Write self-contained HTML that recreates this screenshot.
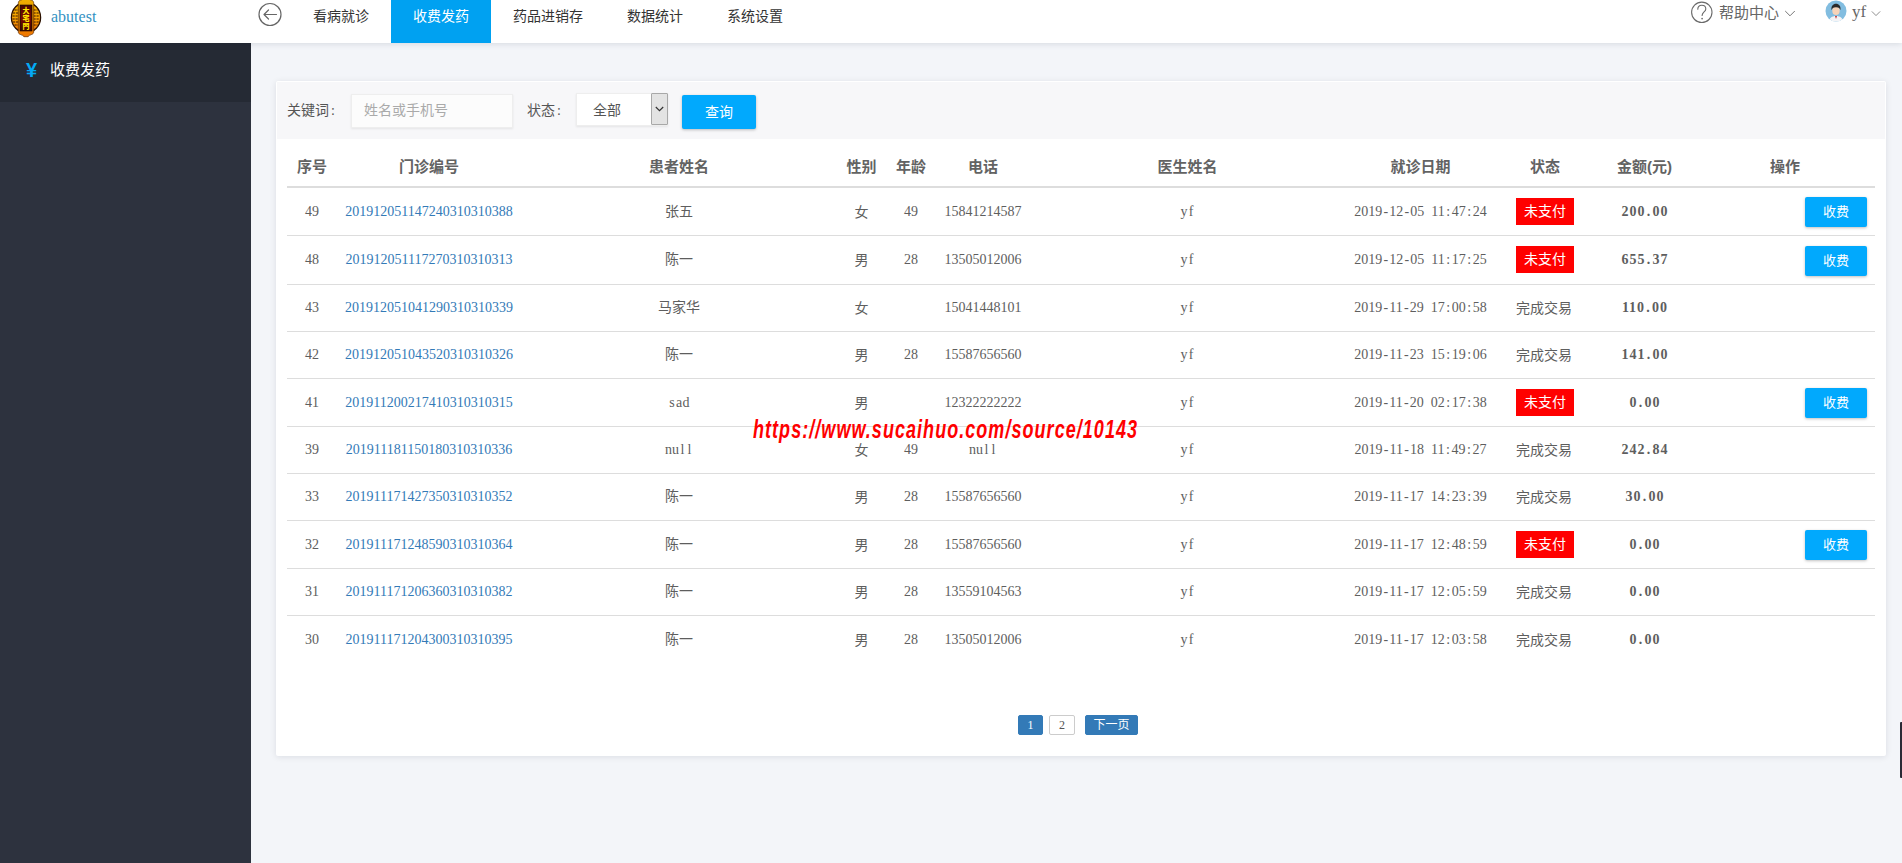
<!DOCTYPE html>
<html lang="zh-CN">
<head>
<meta charset="utf-8">
<title>收费发药</title>
<style>
*{box-sizing:border-box;margin:0;padding:0}
html,body{width:1902px;height:863px;overflow:hidden}
body{position:relative;background:#f3f5f9;font-family:"Liberation Serif","Noto Sans CJK SC",sans-serif;font-size:14px;color:#555}
.abs{position:absolute}
.cn{font-family:"Liberation Sans","Noto Sans CJK SC",sans-serif}
/* header */
#hd{position:absolute;left:0;top:0;width:1902px;height:43px;background:#fff;box-shadow:0 1px 6px rgba(0,21,41,.12);z-index:5}
#brand{position:absolute;left:51px;top:7px;font:16px/20px "Liberation Serif",serif;color:#3391c2}
.nav{position:absolute;top:0;height:43px;line-height:32px;text-align:center;font:14px/32px "Liberation Sans","Noto Sans CJK SC",sans-serif;color:#333}
.nav.on{background:#00a1f1;color:#fff}
#help{position:absolute;left:1719px;top:1px;font:15px/24px "Liberation Sans","Noto Sans CJK SC",sans-serif;color:#666}
#user{position:absolute;left:1852px;top:1px;font:17px/22px "Liberation Serif",serif;color:#666}
/* sidebar */
#sb{position:absolute;left:0;top:43px;width:251px;height:820px;background:#2d323e}
#sb .it{position:absolute;left:0;top:0;width:251px;height:59px;background:#252a34}
#sb .yen{position:absolute;left:26px;top:16px;font:bold 20px/22px "Liberation Sans",sans-serif;color:#03a9f4}
#sb .tx{position:absolute;left:50px;top:15px;font:15px/24px "Liberation Sans","Noto Sans CJK SC",sans-serif;color:#fff}
/* panel */
#pn{position:absolute;left:276px;top:81px;width:1610px;height:675px;background:#fff;box-shadow:0 1px 6px rgba(0,21,41,.10);border-radius:2px}
#pi{position:absolute;left:0;top:1px;width:1610px;height:674px}
#ft{position:absolute;left:1px;top:0;width:1608px;height:57px;background:#f7f7f9}
.lb{position:absolute;font:14px/20px "Liberation Sans","Noto Sans CJK SC",sans-serif;color:#555}
#kw{position:absolute;left:74px;top:12px;width:162px;height:34px;background:#fcfcfc;border:1px solid #eee;box-shadow:0 1px 2px rgba(0,0,0,.08);font:14px/31px "Liberation Sans","Noto Sans CJK SC",sans-serif;color:#aaa;padding-left:12px}
#sl{position:absolute;left:299px;top:11px;width:92px;height:33px;background:#fff;border:1px solid #eee;box-shadow:0 1px 2px rgba(0,0,0,.08);font:14px/32px "Liberation Sans","Noto Sans CJK SC",sans-serif;color:#555;padding-left:16px}
#sl .ar{position:absolute;right:-1px;top:-1px;width:17px;height:32px;background:#e3e3e3;border:1px solid #a8a8a8;border-radius:1px}
#qb{position:absolute;left:405px;top:13px;width:74px;height:34px;background:#01a9fd;color:#fff;text-align:center;font:14px/34px "Liberation Sans","Noto Sans CJK SC",sans-serif;border-radius:2px;box-shadow:0 1px 3px rgba(0,0,0,.25)}
/* table */
table{position:absolute;left:11px;top:65px;width:1588px;border-collapse:separate;border-spacing:0;table-layout:fixed}
th{height:41px;border-bottom:2px solid #ddd;font:bold 15px/20px "Liberation Sans","Noto Sans CJK SC",sans-serif;color:#636363;text-align:center;vertical-align:middle;padding:0}
td{border-bottom:1px solid #ddd;text-align:center;vertical-align:middle;padding:0;font-size:14px;line-height:20px;color:#5e5e5e;white-space:nowrap}
tr:last-child td{border-bottom:0}
td.lk{color:#337ab7}
td.am{font-weight:bold;letter-spacing:1px;padding-left:1px}
td.cn,td.st{font-family:"Liberation Sans","Noto Sans CJK SC",sans-serif}
td.op{text-align:right;padding-right:8px}
i.c{font-style:normal;display:inline-block;width:8px;text-align:center;font-family:"Liberation Serif",serif}
i.p{font-style:normal;display:inline-block;width:7px;text-align:center}
.lt{font-size:14px}
.bd{display:inline-block;width:58px;height:27px;line-height:26px;position:relative;top:0;background:#ff0000;color:#fff;font-size:14px;vertical-align:middle}
.btn{display:inline-block;width:62px;height:30px;line-height:30px;background:#01a9fd;color:#fff;text-align:center;font:13px/30px "Liberation Sans","Noto Sans CJK SC",sans-serif;border-radius:2px;box-shadow:0 1px 3px rgba(0,0,0,.25);vertical-align:middle;position:relative;top:0}
tr.r2 .bd{top:-1px}
.ok{position:relative;left:-1px}
tr.r2 .btn{top:1px}
/* pagination */
.pg{position:absolute;top:633px;height:20px;font:12px/18px "Liberation Serif","Noto Sans CJK SC",serif;text-align:center;border-radius:2px}
.pg.a{background:#337ab7;color:#fff;border:1px solid #337ab7}
.pg.b{background:#fff;color:#555;border:1px solid #ccc}
#wm{position:absolute;left:753px;top:413px;z-index:9;font:italic bold 25px/32px "Liberation Sans",sans-serif;color:#ff0000;white-space:nowrap;transform-origin:0 50%;transform:scaleX(.72);letter-spacing:1.45px}
#sc{position:absolute;left:1900px;top:722px;width:2px;height:56px;background:#2a2a35;border-radius:1px 0 0 1px}
</style>
</head>
<body>
<div id="hd">
  <svg class="abs" style="left:9px;top:-3px" width="34" height="42" viewBox="0 0 34 42">
    <defs>
      <linearGradient id="g1" x1="0" y1="0" x2="0" y2="1"><stop offset="0" stop-color="#f5b400"/><stop offset=".5" stop-color="#f7a400"/><stop offset="1" stop-color="#ee6c00"/></linearGradient>
      <linearGradient id="g2" x1="0" y1="0" x2="0" y2="1"><stop offset="0" stop-color="#4a0600"/><stop offset=".5" stop-color="#7c0800"/><stop offset="1" stop-color="#3c0500"/></linearGradient>
      <linearGradient id="g3" x1="0" y1="0" x2="0" y2="1"><stop offset="0" stop-color="#f0b000"/><stop offset=".6" stop-color="#e89000"/><stop offset="1" stop-color="#f07400"/></linearGradient>
    </defs>
    <ellipse cx="17" cy="20.500" rx="14.600" ry="15.200" fill="url(#g1)" stroke="#2a1000" stroke-width="1.300"/>
    <g stroke="#2a0e00" stroke-width="1.100" fill="none" opacity=".95" stroke-dasharray="2.200 .800">
      <path d="M5.500 13h4M4 16h5.500M3.500 19h6M3.500 22h6M4 25h5.500M5.500 28h4"/>
      <path d="M24.500 13h4M24.500 16h5.500M24.500 19h6M24.500 22h6M24.500 25h5.500M24.500 28h4"/>
    </g>
    <path d="M9.300 6.500c0-2 .800-3 2.200-3.300 1.500-.400 2.500-1.200 3-2.200h5c.500 1 1.500 1.800 3 2.200 1.400.300 2.200 1.300 2.200 3.300v28c0 1.800-.800 2.600-2.200 3-1.500.400-2.800 1.200-3.500 2.200h-4c-.700-1-2-1.800-3.500-2.200-1.400-.400-2.200-1.200-2.200-3z" fill="url(#g3)" stroke="#5a2600" stroke-width=".700"/>
    <rect x="11.200" y="8.200" width="11.600" height="25.600" fill="url(#g2)" stroke="#1e0300" stroke-width="1"/>
    <g font-family="'Noto Sans CJK SC',sans-serif" font-weight="900" font-size="7" fill="#ffe600" text-anchor="middle">
      <text x="17" y="15.700">大</text><text x="17" y="23.900">宅</text><text x="17" y="32.300">門</text>
    </g>
  </svg>
  <div id="brand">abutest</div>
  <svg class="abs" style="left:257px;top:2px" width="26" height="26" viewBox="0 0 26 26" fill="none" stroke="#666" stroke-width="1.2"><circle cx="13" cy="12.500" r="11"/><path d="M19.500 12.500H7M11.500 8l-4.500 4.500 4.500 4.500" stroke-linecap="round" stroke-linejoin="round"/></svg>
  <div class="nav" style="left:291px;width:100px">看病就诊</div>
  <div class="nav on" style="left:391px;width:100px">收费发药</div>
  <div class="nav" style="left:491px;width:114px">药品进销存</div>
  <div class="nav" style="left:605px;width:100px">数据统计</div>
  <div class="nav" style="left:705px;width:100px">系统设置</div>
  <svg class="abs" style="left:1690px;top:0" width="24" height="25" viewBox="0 0 24 25" fill="none" stroke="#6a6a6a" stroke-width="1.100"><circle cx="11.800" cy="12.300" r="10.200"/><path d="M7.800 9.300c0-2.600 1.700-4.100 4-4.100s4 1.500 4 3.700c0 2.900-3.700 3.200-3.700 6.600" stroke-linecap="round"/><circle cx="12.100" cy="18.600" r=".850" fill="#6a6a6a" stroke="none"/></svg>
  <div id="help">帮助中心</div>
  <svg class="abs" style="left:1784px;top:10px" width="12" height="7" viewBox="0 0 12 7" fill="none" stroke="#777" stroke-width="1"><path d="M1.200 1l4.800 4.800L10.800 1"/></svg>
  <svg class="abs" style="left:1825px;top:0" width="22" height="22" viewBox="0 0 22 22">
    <defs><clipPath id="cp"><circle cx="11" cy="11" r="10.500"/></clipPath></defs>
    <circle cx="11" cy="11" r="10.500" fill="#82bde0"/>
    <g clip-path="url(#cp)">
      <path d="M4 22c0-4 3-6 7-6s7 2 7 6z" fill="#f4f4f6"/>
      <path d="M10 16l1 3 1-3z" fill="#c03030"/>
      <ellipse cx="11" cy="10.800" rx="3.700" ry="4.200" fill="#f6d3b8"/>
      <path d="M6.600 10.200c-.8-4.200 1.600-6.400 4.400-6.400s5.200 2.200 4.400 6.400c-.6-1.900-1.300-2.700-4.400-2.900-3.100.2-3.800 1-4.400 2.900z" fill="#2a2a2a"/>
    </g>
  </svg>
  <div id="user">yf</div>
  <svg class="abs" style="left:1871px;top:10px" width="10" height="7" viewBox="0 0 12 8" fill="none" stroke="#777" stroke-width="1"><path d="M1 1.500l5 5 5-5"/></svg>
</div>
<div id="sb"><div class="it"></div><div class="yen">¥</div><div class="tx">收费发药</div></div>
<div id="pn"><div id="pi">
  <div id="ft">
    <div class="lb" style="left:10px;top:18px">关键词<i class="c">:</i></div>
    <div id="kw">姓名或手机号</div>
    <div class="lb" style="left:250px;top:18px">状态<i class="c">:</i></div>
    <div id="sl">全部<div class="ar"><svg class="abs" style="left:3px;top:12px" width="9" height="6" viewBox="0 0 9 6" fill="none" stroke="#333" stroke-width="1.200"><path d="M.8 1l3.700 3.700L8.200 1"/></svg></div></div>
    <div id="qb">查询</div>
  </div>
  <table>
    <colgroup><col style="width:50px"><col style="width:184px"><col style="width:316px"><col style="width:49px"><col style="width:50px"><col style="width:94px"><col style="width:315px"><col style="width:151px"><col style="width:98px"><col style="width:101px"><col style="width:180px"></colgroup>
    <thead><tr><th>序号</th><th>门诊编号</th><th>患者姓名</th><th>性别</th><th>年龄</th><th>电话</th><th>医生姓名</th><th>就诊日期</th><th>状态</th><th>金额(元)</th><th>操作</th></tr></thead>
    <tbody>
<tr style="height:48px"><td>49</td><td class="lk">201912051147240310310388</td><td>张五</td><td class="cn">女</td><td>49</td><td>15841214587</td><td><span class="lt"><i class="p">y</i><i class="p">f</i></span></td><td>2019<i class="p">-</i>12<i class="p">-</i>05<i class="p"> </i>11<i class="p">:</i>47<i class="p">:</i>24</td><td class="st"><span class="bd">未支付</span></td><td class="am">200<i class="p">.</i>00</td><td class="op"><span class="btn">收费</span></td></tr>
<tr class="r2" style="height:49px"><td>48</td><td class="lk">201912051117270310310313</td><td>陈一</td><td class="cn">男</td><td>28</td><td>13505012006</td><td><span class="lt"><i class="p">y</i><i class="p">f</i></span></td><td>2019<i class="p">-</i>12<i class="p">-</i>05<i class="p"> </i>11<i class="p">:</i>17<i class="p">:</i>25</td><td class="st"><span class="bd">未支付</span></td><td class="am">655<i class="p">.</i>37</td><td class="op"><span class="btn">收费</span></td></tr>
<tr style="height:47px"><td>43</td><td class="lk">201912051041290310310339</td><td>马家华</td><td class="cn">女</td><td></td><td>15041448101</td><td><span class="lt"><i class="p">y</i><i class="p">f</i></span></td><td>2019<i class="p">-</i>11<i class="p">-</i>29<i class="p"> </i>17<i class="p">:</i>00<i class="p">:</i>58</td><td class="st"><span class="ok">完成交易</span></td><td class="am">110<i class="p">.</i>00</td><td class="op"></td></tr>
<tr style="height:47px"><td>42</td><td class="lk">201912051043520310310326</td><td>陈一</td><td class="cn">男</td><td>28</td><td>15587656560</td><td><span class="lt"><i class="p">y</i><i class="p">f</i></span></td><td>2019<i class="p">-</i>11<i class="p">-</i>23<i class="p"> </i>15<i class="p">:</i>19<i class="p">:</i>06</td><td class="st"><span class="ok">完成交易</span></td><td class="am">141<i class="p">.</i>00</td><td class="op"></td></tr>
<tr style="height:48px"><td>41</td><td class="lk">201911200217410310310315</td><td><span class="lt"><i class="p">s</i><i class="p">a</i><i class="p">d</i></span></td><td class="cn">男</td><td></td><td>12322222222</td><td><span class="lt"><i class="p">y</i><i class="p">f</i></span></td><td>2019<i class="p">-</i>11<i class="p">-</i>20<i class="p"> </i>02<i class="p">:</i>17<i class="p">:</i>38</td><td class="st"><span class="bd">未支付</span></td><td class="am">0<i class="p">.</i>00</td><td class="op"><span class="btn">收费</span></td></tr>
<tr style="height:47px"><td>39</td><td class="lk">201911181150180310310336</td><td><span class="lt"><i class="p">n</i><i class="p">u</i><i class="p">l</i><i class="p">l</i></span></td><td class="cn">女</td><td>49</td><td><span class="lt"><i class="p">n</i><i class="p">u</i><i class="p">l</i><i class="p">l</i></span></td><td><span class="lt"><i class="p">y</i><i class="p">f</i></span></td><td>2019<i class="p">-</i>11<i class="p">-</i>18<i class="p"> </i>11<i class="p">:</i>49<i class="p">:</i>27</td><td class="st"><span class="ok">完成交易</span></td><td class="am">242<i class="p">.</i>84</td><td class="op"></td></tr>
<tr style="height:47px"><td>33</td><td class="lk">201911171427350310310352</td><td>陈一</td><td class="cn">男</td><td>28</td><td>15587656560</td><td><span class="lt"><i class="p">y</i><i class="p">f</i></span></td><td>2019<i class="p">-</i>11<i class="p">-</i>17<i class="p"> </i>14<i class="p">:</i>23<i class="p">:</i>39</td><td class="st"><span class="ok">完成交易</span></td><td class="am">30<i class="p">.</i>00</td><td class="op"></td></tr>
<tr style="height:48px"><td>32</td><td class="lk">201911171248590310310364</td><td>陈一</td><td class="cn">男</td><td>28</td><td>15587656560</td><td><span class="lt"><i class="p">y</i><i class="p">f</i></span></td><td>2019<i class="p">-</i>11<i class="p">-</i>17<i class="p"> </i>12<i class="p">:</i>48<i class="p">:</i>59</td><td class="st"><span class="bd">未支付</span></td><td class="am">0<i class="p">.</i>00</td><td class="op"><span class="btn">收费</span></td></tr>
<tr style="height:47px"><td>31</td><td class="lk">201911171206360310310382</td><td>陈一</td><td class="cn">男</td><td>28</td><td>13559104563</td><td><span class="lt"><i class="p">y</i><i class="p">f</i></span></td><td>2019<i class="p">-</i>11<i class="p">-</i>17<i class="p"> </i>12<i class="p">:</i>05<i class="p">:</i>59</td><td class="st"><span class="ok">完成交易</span></td><td class="am">0<i class="p">.</i>00</td><td class="op"></td></tr>
<tr style="height:47px"><td>30</td><td class="lk">201911171204300310310395</td><td>陈一</td><td class="cn">男</td><td>28</td><td>13505012006</td><td><span class="lt"><i class="p">y</i><i class="p">f</i></span></td><td>2019<i class="p">-</i>11<i class="p">-</i>17<i class="p"> </i>12<i class="p">:</i>03<i class="p">:</i>58</td><td class="st"><span class="ok">完成交易</span></td><td class="am">0<i class="p">.</i>00</td><td class="op"></td></tr>

    </tbody>
  </table>
  <div class="pg a" style="left:742px;width:25px">1</div>
  <div class="pg b" style="left:773px;width:26px">2</div>
  <div class="pg a" style="left:809px;width:53px;line-height:19px">下一页</div>
</div></div>
<div id="wm">https://www.sucaihuo.com/source/10143</div>
<div id="sc"></div>
</body>
</html>
